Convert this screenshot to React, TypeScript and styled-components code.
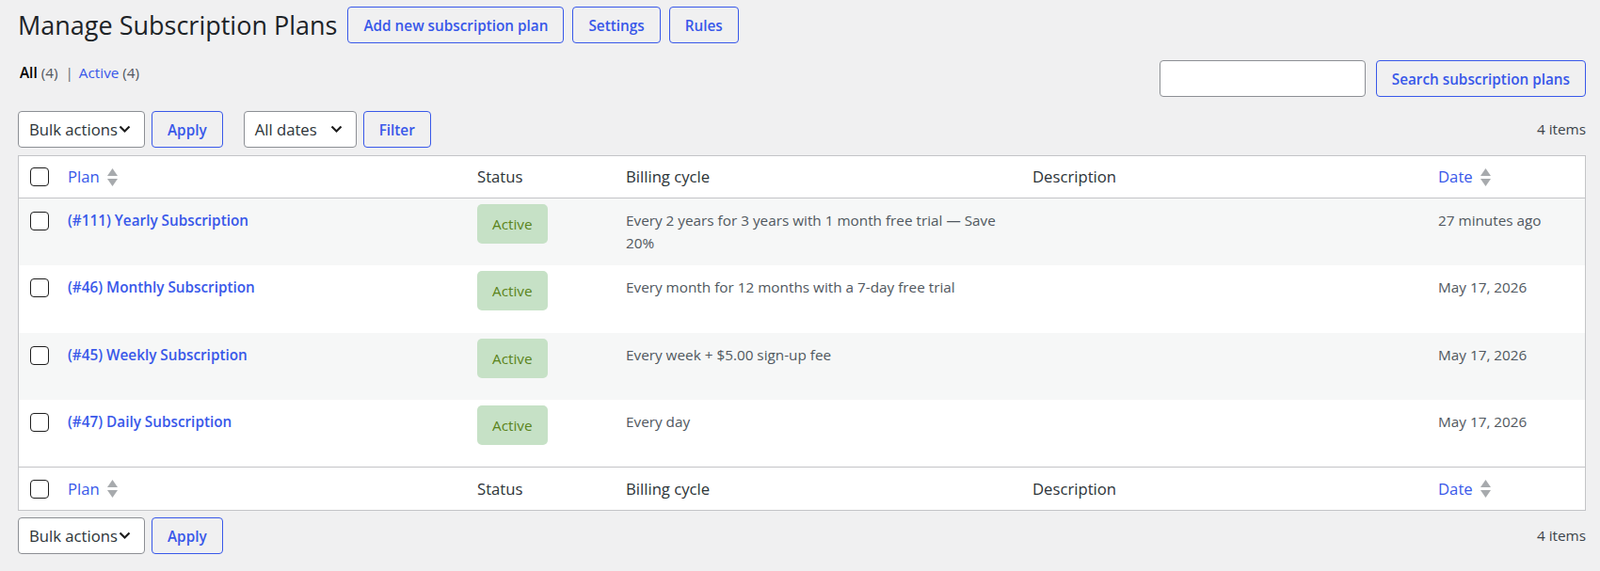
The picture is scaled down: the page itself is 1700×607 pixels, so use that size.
import React from "react";
import styled, { createGlobalStyle } from "styled-components";

const GlobalStyle = createGlobalStyle`
  body {
    margin: 0;
    background: #f0f0f1;
    font-family: "Open Sans", "Noto Sans", sans-serif;
    font-size: 15.3px;
    line-height: 1.5;
    color: #3c434a;
  }
  * { box-sizing: border-box; }
`;

const Wrap = styled.div`
  padding: 7px 15px 0 19px;
`;

const Header = styled.div`
  display: flex;
  align-items: center;
  gap: 9px;
`;

const Title = styled.h1`
  margin: 0 2px 0 0;
  font-size: 27px;
  font-weight: 400;
  line-height: 39px;
  color: #1d2327;
`;

const Button = styled.button`
  display: inline-flex;
  align-items: center;
  justify-content: center;
  height: 39px;
  padding: 0 16px;
  border: 1px solid #3858e9;
  border-radius: 4px;
  background: transparent;
  color: #3858e9;
  font-family: inherit;
  font-size: 15.3px;
  font-weight: 600;
  white-space: nowrap;
  cursor: pointer;
`;

const SubRow = styled.div`
  display: flex;
  justify-content: space-between;
  align-items: flex-start;
  margin-top: 18px;
`;

const Views = styled.ul`
  display: flex;
  align-items: center;
  margin: 0;
  padding: 1px 0 0 2px;
  list-style: none;
  line-height: 24px;
  color: #50575e;
`;

const ViewItem = styled.li<{ $current?: boolean }>`
  color: #50575e;
  a {
    color: ${(p) => (p.$current ? "#000" : "#3858e9")};
    font-weight: ${(p) => (p.$current ? 600 : 400)};
    text-decoration: none;
  }
`;

const Sep = styled.span`
  margin: 0 6px 0 8px;
  color: #646970;
`;

const SearchBox = styled.div`
  display: flex;
  gap: 11px;
`;

const SearchInput = styled.input`
  width: 219px;
  height: 39px;
  border: 1px solid #8c8f94;
  border-radius: 4px;
  background: #fff;
  padding: 0 10px;
  font-family: inherit;
  font-size: 15.3px;
`;

const Tablenav = styled.div<{ $top?: boolean }>`
  display: flex;
  align-items: center;
  height: 39px;
  margin-top: ${(p) => (p.$top ? "15px" : "7px")};
`;

const Group = styled.div`
  display: flex;
  align-items: center;
  gap: 7px;
  & + & {
    margin-left: 22px;
  }
`;

const Select = styled.button<{ $w: number }>`
  display: inline-flex;
  align-items: center;
  justify-content: space-between;
  width: ${(p) => p.$w}px;
  height: 39px;
  padding: 0 14px 0 11px;
  border: 1px solid #8c8f94;
  border-radius: 4px;
  background: #fff;
  color: #2c3338;
  font-family: inherit;
  font-size: 16.7px;
  white-space: nowrap;
`;

const ItemsCount = styled.span`
  margin-left: auto;
  color: #3c434a;
`;

const Table = styled.table`
  width: 100%;
  margin-top: 8px;
  table-layout: fixed;
  border-collapse: separate;
  border-spacing: 0;
  background: #fff;
  border: 1px solid #c3c4c7;
`;

const Th = styled.th<{ $w?: number; $check?: boolean; $foot?: boolean }>`
  width: ${(p) => (p.$w ? `${p.$w}px` : "auto")};
  height: ${(p) => (p.$foot ? "46px" : "45px")};
  padding: ${(p) => (p.$check ? "0 0 0 12px" : "0 10px")};
  text-align: left;
  vertical-align: middle;
  font-size: 16.7px;
  font-weight: 400;
  color: #2c3338;
  border-bottom: ${(p) => (p.$foot ? "none" : "1px solid #c3c4c7")};
  border-top: ${(p) => (p.$foot ? "1px solid #c3c4c7" : "none")};
  line-height: 24px;
`;

const SortLink = styled.a`
  display: inline-flex;
  align-items: center;
  gap: 8px;
  color: #3858e9;
  text-decoration: none;
`;

const Row = styled.tr<{ $alt: boolean }>`
  background: ${(p) => (p.$alt ? "#f6f7f7" : "#fff")};
`;

const Td = styled.td<{ $check?: boolean }>`
  height: 71.25px;
  padding: ${(p) => (p.$check ? "14px 0 0 12px" : "11px 10px 0")};
  vertical-align: top;
  color: #50575e;
  line-height: 24px;
`;

const PlanLink = styled.a`
  color: #3858e9;
  font-size: 15.3px;
  font-weight: 600;
  text-decoration: none;
`;

const Badge = styled.mark`
  display: inline-flex;
  align-items: center;
  height: 42px;
  margin-top: -5px;
  padding: 0 16px;
  border-radius: 5px;
  background: #c6e1c6;
  color: #5b841b;
`;

const Check = styled.input.attrs({ type: "checkbox" })`
  appearance: none;
  display: block;
  width: 20px;
  height: 20px;
  margin: 0;
  border: 1px solid #1e1e1e;
  border-radius: 4px;
  background: #fff;
`;

const SortIcon = () => (
  <svg width="11" height="19" viewBox="0 0 11 19" aria-hidden="true">
    <polygon points="0,8 5.5,0 11,8" fill="#a7aaad" />
    <polygon points="0,11 11,11 5.5,19" fill="#a7aaad" />
  </svg>
);

const Chevron = () => (
  <svg width="13" height="9" viewBox="0 0 13 9" aria-hidden="true">
    <path d="M1.5 1.5 L6.5 6.5 L11.5 1.5" fill="none" stroke="#1e1e1e" strokeWidth="2.2" />
  </svg>
);

const plans = [
  {
    name: "(#111) Yearly Subscription",
    cycle: "Every 2 years for 3 years with 1 month free trial — Save 20%",
    date: "27 minutes ago",
  },
  {
    name: "(#46) Monthly Subscription",
    cycle: "Every month for 12 months with a 7-day free trial",
    date: "May 17, 2026",
  },
  {
    name: "(#45) Weekly Subscription",
    cycle: "Every week + $5.00 sign-up fee",
    date: "May 17, 2026",
  },
  {
    name: "(#47) Daily Subscription",
    cycle: "Every day",
    date: "May 17, 2026",
  },
];

const HeadCells = ({ foot }: { foot?: boolean }) => (
  <tr>
    <Th $w={42} $check $foot={foot}>
      <Check aria-label="Select all" />
    </Th>
    <Th $w={435} $foot={foot}>
      <SortLink href="#">
        Plan <SortIcon />
      </SortLink>
    </Th>
    <Th $w={158} $foot={foot}>Status</Th>
    <Th $w={432} $foot={foot}>Billing cycle</Th>
    <Th $w={431} $foot={foot}>Description</Th>
    <Th $foot={foot}>
      <SortLink href="#">
        Date <SortIcon />
      </SortLink>
    </Th>
  </tr>
);

export default function App() {
  return (
    <>
      <GlobalStyle />
      <Wrap>
        <Header>
          <Title>Manage Subscription Plans</Title>
          <Button>Add new subscription plan</Button>
          <Button>Settings</Button>
          <Button>Rules</Button>
        </Header>

        <SubRow>
          <Views>
            <ViewItem $current>
              <a href="#">All</a> (4)
            </ViewItem>
            <Sep>|</Sep>
            <ViewItem>
              <a href="#">Active</a> (4)
            </ViewItem>
          </Views>
          <SearchBox>
            <SearchInput aria-label="Search subscription plans" />
            <Button>Search subscription plans</Button>
          </SearchBox>
        </SubRow>

        <Tablenav $top>
          <Group>
            <Select $w={135}>
              Bulk actions <Chevron />
            </Select>
            <Button>Apply</Button>
          </Group>
          <Group>
            <Select $w={120}>
              All dates <Chevron />
            </Select>
            <Button>Filter</Button>
          </Group>
          <ItemsCount>4 items</ItemsCount>
        </Tablenav>

        <Table>
          <thead>
            <HeadCells />
          </thead>
          <tbody>
            {plans.map((p, i) => (
              <Row key={p.name} $alt={i % 2 === 0}>
                <Td $check>
                  <Check aria-label={`Select ${p.name}`} />
                </Td>
                <Td>
                  <PlanLink href="#">{p.name}</PlanLink>
                </Td>
                <Td>
                  <Badge>Active</Badge>
                </Td>
                <Td>{p.cycle}</Td>
                <Td></Td>
                <Td>{p.date}</Td>
              </Row>
            ))}
          </tbody>
          <tfoot>
            <HeadCells foot />
          </tfoot>
        </Table>

        <Tablenav>
          <Group>
            <Select $w={135}>
              Bulk actions <Chevron />
            </Select>
            <Button>Apply</Button>
          </Group>
          <ItemsCount>4 items</ItemsCount>
        </Tablenav>
      </Wrap>
    </>
  );
}
